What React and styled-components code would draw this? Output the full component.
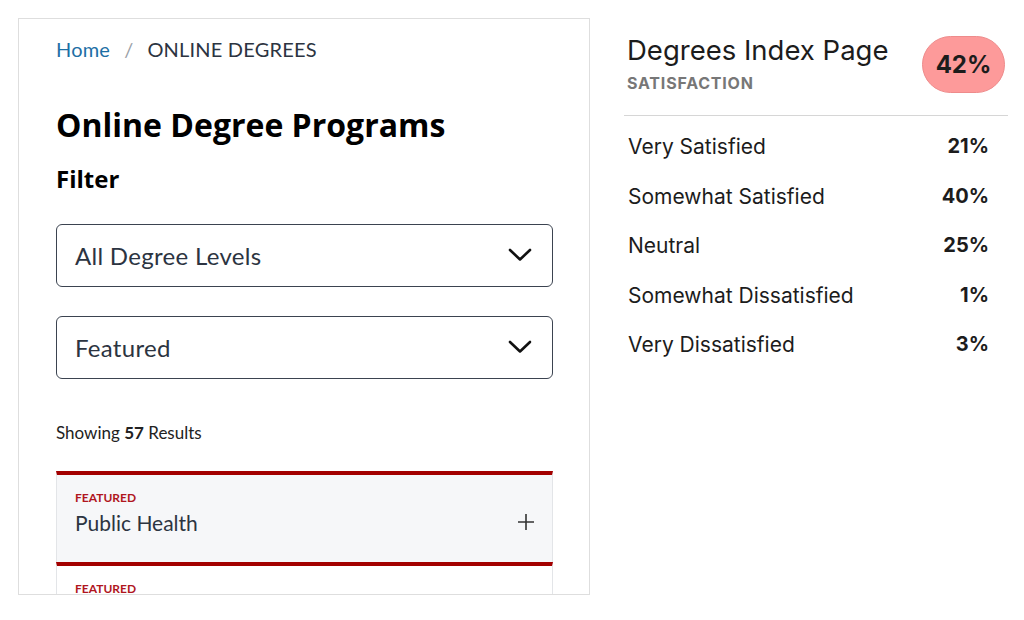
import styled, { createGlobalStyle } from "styled-components";

const Global = createGlobalStyle`
    body {
        margin: 0;
        background: #fff;
    }
`;

const Page = styled.div`
    display: flex;
    align-items: flex-start;
    gap: 34px;
    padding: 18px 0 0 18px;
`;

const Panel = styled.div`
    box-sizing: border-box;
    width: 572px;
    height: 577px;
    border: 1px solid #dedede;
    padding: 18px 36px 0 37px;
    overflow: hidden;
    font-family: Lato, "Liberation Sans", sans-serif;
    color: #2c3441;
`;

const Crumbs = styled.div`
    display: flex;
    gap: 14px;
    font-size: 20px;
    line-height: 24px;
    letter-spacing: 0.2px;
`;

const CrumbLink = styled.a`
    color: #1d6fa5;
    text-decoration: none;
`;

const Slash = styled.span`
    color: #9aa0a6;
`;

const Title = styled.h1`
    margin: 44px 0 0;
    font-family: "Open Sans", "Liberation Sans", sans-serif;
    font-size: 32px;
    line-height: 40px;
    font-weight: 700;
    color: #000;
`;

const Subtitle = styled.h2`
    margin: 18px 0 0;
    font-family: "Open Sans", "Liberation Sans", sans-serif;
    font-size: 24px;
    line-height: 32px;
    font-weight: 700;
    color: #000;
`;

const Select = styled.div`
    box-sizing: border-box;
    display: flex;
    align-items: center;
    justify-content: space-between;
    height: 63px;
    margin-top: ${p => p.$top}px;
    padding: 0 20px 0 18px;
    border: 1.5px solid #3b4350;
    border-radius: 6px;
    font-size: 24px;
    letter-spacing: 0.3px;
    color: #2c3441;
`;

const Count = styled.p`
    margin: 44px 0 0;
    font-size: 17px;
    line-height: 20px;
    color: #222;

    b {
        font-weight: 700;
    }
`;

const Card = styled.div`
    box-sizing: border-box;
    display: flex;
    align-items: flex-end;
    justify-content: space-between;
    margin-top: ${p => p.$top}px;
    padding: 16px 17px 27px 18px;
    border-top: 4px solid #a30000;
    border-left: 1px solid #e3e5e8;
    border-right: 1px solid #e3e5e8;
    background: ${p => (p.$shaded ? "#f6f7f9" : "#fff")};
`;

const Tag = styled.div`
    font-size: 12px;
    line-height: 1.2;
    font-weight: 700;
    color: #b0161e;
`;

const Name = styled.div`
    margin-top: 5px;
    font-size: 21px;
    line-height: 1.2;
    color: #2c3441;
`;

const Side = styled.div`
    width: 384px;
    padding-top: 16px;
    font-family: Inter, "Liberation Sans", sans-serif;
    color: #1c1c1c;
`;

const Head = styled.div`
    display: flex;
    align-items: center;
    justify-content: space-between;
    padding: 0 3px;
`;

const PageName = styled.div`
    font-size: 27.5px;
    line-height: 32px;
`;

const Kicker = styled.div`
    margin-top: 7px;
    font-size: 16px;
    line-height: 20px;
    font-weight: 700;
    color: #777;
    letter-spacing: 0.8px;
`;

const Badge = styled.div`
    box-sizing: border-box;
    display: flex;
    align-items: center;
    justify-content: center;
    width: 83px;
    height: 57px;
    border: 1px solid #ee8b8b;
    border-radius: 29px;
    background: #fd9a9a;
    font-size: 24px;
    font-weight: 700;
    color: #1c1c1c;
    margin-top: 2px;
`;

const Divider = styled.hr`
    margin: 22px 0 6px;
    border: 0;
    border-top: 1px solid #d6d6d6;
`;

const Row = styled.div`
    display: flex;
    justify-content: space-between;
    padding: 0 19px 0 4px;
    font-size: 21px;
    line-height: 49.5px;
`;

const Value = styled.span`
    font-weight: 700;
    font-size: 20px;
`;

const Chevron = () => (
    <svg width="24" height="14" viewBox="0 0 24 14" fill="none">
        <path d="M2 2 L12 11.5 L22 2" stroke="#111" strokeWidth="2.6" strokeLinecap="round" strokeLinejoin="round" />
    </svg>
);

const Plus = () => (
    <svg width="18" height="18" viewBox="0 0 18 18" fill="none" style={{ marginBottom: 4 }}>
        <path d="M9 1 V17 M1 9 H17" stroke="#333" strokeWidth="1.6" />
    </svg>
);

const rows = [
    ["Very Satisfied", "21%"],
    ["Somewhat Satisfied", "40%"],
    ["Neutral", "25%"],
    ["Somewhat Dissatisfied", "1%"],
    ["Very Dissatisfied", "3%"],
];

export default function App() {
    return (
        <>
            <Global />
            <Page>
                <Panel>
                    <Crumbs>
                        <CrumbLink href="#">Home</CrumbLink>
                        <Slash>/</Slash>
                        <span>ONLINE DEGREES</span>
                    </Crumbs>
                    <Title>Online Degree Programs</Title>
                    <Subtitle>Filter</Subtitle>
                    <Select $top={28.5}>
                        All Degree Levels
                        <Chevron />
                    </Select>
                    <Select $top={29}>
                        Featured
                        <Chevron />
                    </Select>
                    <Count>
                        Showing <b>57</b> Results
                    </Count>
                    <Card $top={28} $shaded>
                        <div>
                            <Tag>FEATURED</Tag>
                            <Name>Public Health</Name>
                        </div>
                        <Plus />
                    </Card>
                    <Card $top={0}>
                        <Tag>FEATURED</Tag>
                    </Card>
                </Panel>
                <Side>
                    <Head>
                        <div>
                            <PageName>Degrees Index Page</PageName>
                            <Kicker>SATISFACTION</Kicker>
                        </div>
                        <Badge>42%</Badge>
                    </Head>
                    <Divider />
                    {rows.map(([label, value]) => (
                        <Row key={label}>
                            <span>{label}</span>
                            <Value>{value}</Value>
                        </Row>
                    ))}
                </Side>
            </Page>
        </>
    );
}
